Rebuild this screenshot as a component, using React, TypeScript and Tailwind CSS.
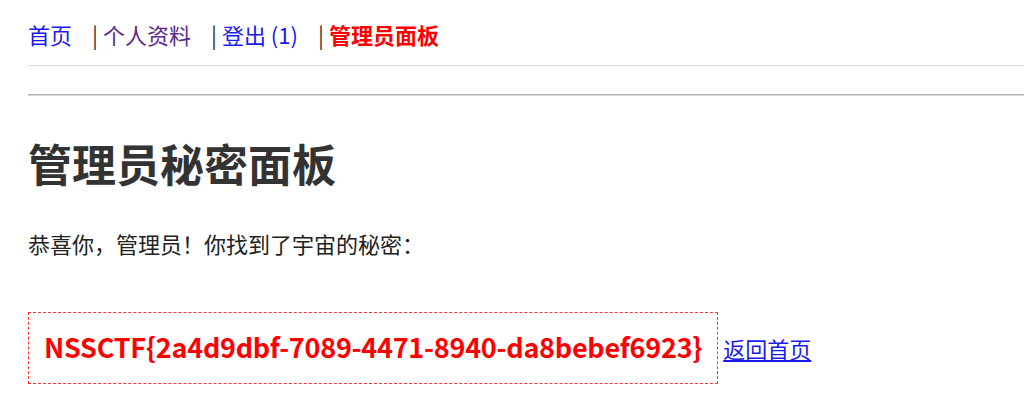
import React from "react";

export default function App() {
  return (
    <div className="min-h-screen bg-white pl-[28px] font-['Noto_Sans_CJK_SC','Noto_Sans',sans-serif]">
      <nav className="flex items-center border-b border-[#dddddd] pt-[18px] pb-[14px] text-[22px] leading-[33px]">
        <a href="#" className="text-[#1a1aee]">首页</a>
        <span className="ml-[20px] mr-[5px] text-[#333333]">|</span>
        <a href="#" className="text-[#5a2a8e]">个人资料</a>
        <span className="ml-[20px] mr-[5px] text-[#333333]">|</span>
        <a href="#" className="text-[#1a1aee]">登出 (1)</a>
        <span className="ml-[20px] mr-[5px] text-[#333333]">|</span>
        <a href="#" className="font-bold text-[#ff0000]">管理员面板</a>
      </nav>
      <div className="mt-[28px] h-0 border-t border-b border-t-[#b0b0b0] border-b-[#d8d8d8]" />
      <h1 className="mt-[41px] text-[44px] font-bold leading-[52px] text-[#333333]">管理员秘密面板</h1>
      <p className="mt-[38px] text-[22px] leading-[33px] text-[#222222]">恭喜你，管理员！你找到了宇宙的秘密：</p>
      <div className="mt-[52px] flex items-baseline">
        <div className="border border-dashed border-[#ff3333] px-[15px] pt-[14px] pb-[16px] text-[27px] font-bold leading-[40px] tracking-[-0.25px] text-[#ff0000]">
          NSSCTF{"{"}2a4d9dbf-7089-4471-8940-da8bebef6923{"}"}
        </div>
        <a href="#" className="ml-[5px] text-[22px] leading-[33px] text-[#1a1aee] underline">返回首页</a>
      </div>
    </div>
  );
}
